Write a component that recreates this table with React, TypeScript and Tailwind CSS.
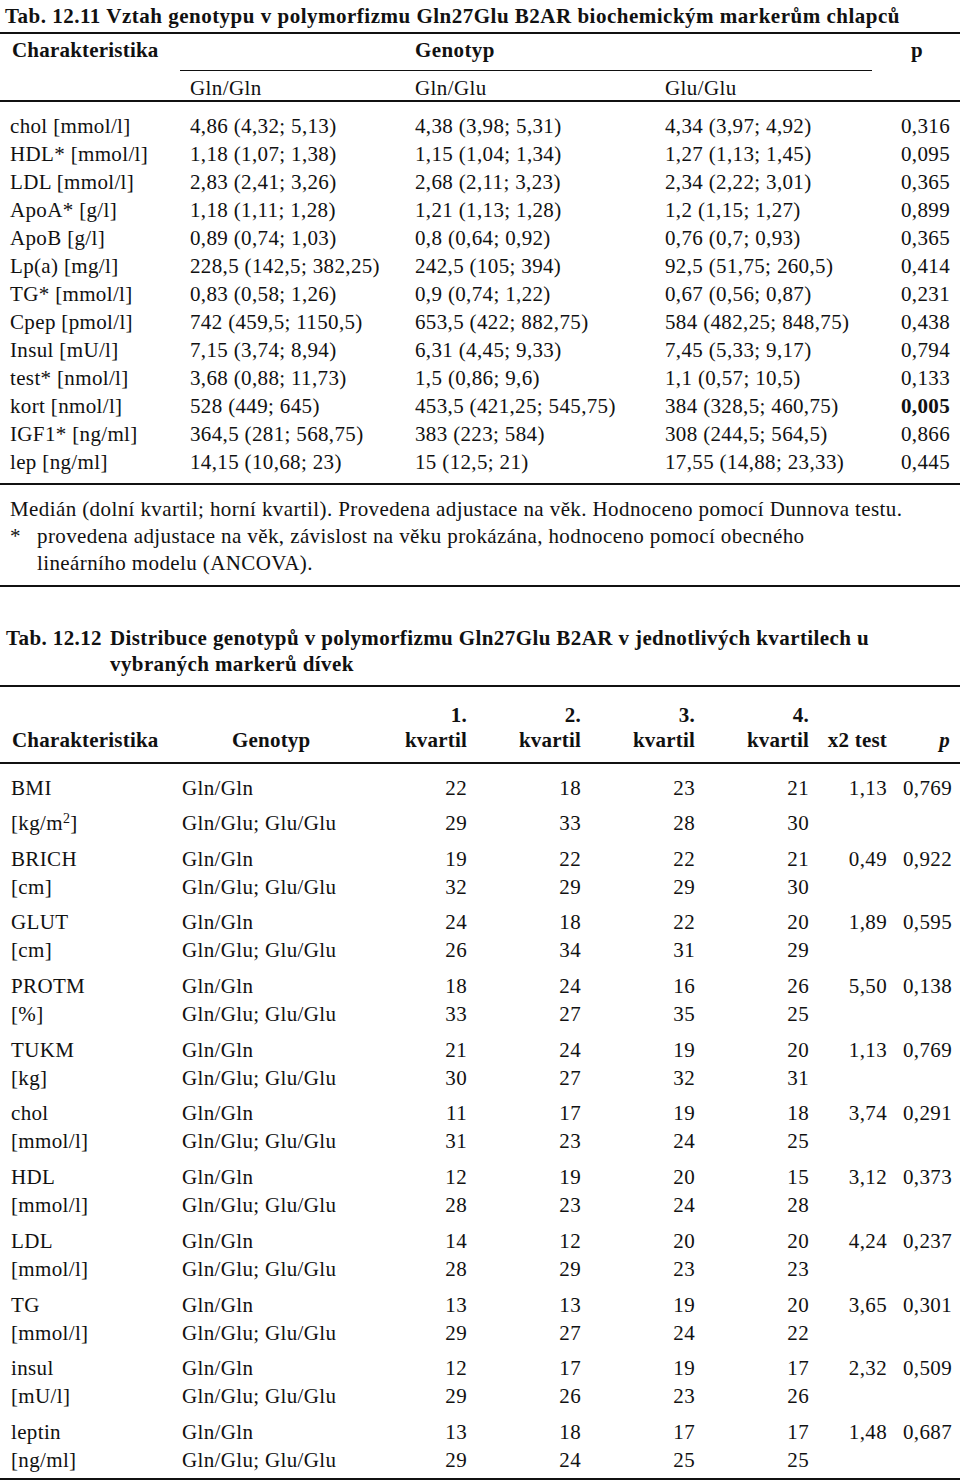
import React from "react";

const t1Rows = [
  ["chol [mmol/l]", "4,86 (4,32; 5,13)", "4,38 (3,98; 5,31)", "4,34 (3,97; 4,92)", "0,316"],
  ["HDL* [mmol/l]", "1,18 (1,07; 1,38)", "1,15 (1,04; 1,34)", "1,27 (1,13; 1,45)", "0,095"],
  ["LDL [mmol/l]", "2,83 (2,41; 3,26)", "2,68 (2,11; 3,23)", "2,34 (2,22; 3,01)", "0,365"],
  ["ApoA* [g/l]", "1,18 (1,11; 1,28)", "1,21 (1,13; 1,28)", "1,2 (1,15; 1,27)", "0,899"],
  ["ApoB [g/l]", "0,89 (0,74; 1,03)", "0,8 (0,64; 0,92)", "0,76 (0,7; 0,93)", "0,365"],
  ["Lp(a) [mg/l]", "228,5 (142,5; 382,25)", "242,5 (105; 394)", "92,5 (51,75; 260,5)", "0,414"],
  ["TG* [mmol/l]", "0,83 (0,58; 1,26)", "0,9 (0,74; 1,22)", "0,67 (0,56; 0,87)", "0,231"],
  ["Cpep [pmol/l]", "742 (459,5; 1150,5)", "653,5 (422; 882,75)", "584 (482,25; 848,75)", "0,438"],
  ["Insul [mU/l]", "7,15 (3,74; 8,94)", "6,31 (4,45; 9,33)", "7,45 (5,33; 9,17)", "0,794"],
  ["test* [nmol/l]", "3,68 (0,88; 11,73)", "1,5 (0,86; 9,6)", "1,1 (0,57; 10,5)", "0,133"],
  ["kort [nmol/l]", "528 (449; 645)", "453,5 (421,25; 545,75)", "384 (328,5; 460,75)", "0,005"],
  ["IGF1* [ng/ml]", "364,5 (281; 568,75)", "383 (223; 584)", "308 (244,5; 564,5)", "0,866"],
  ["lep [ng/ml]", "14,15 (10,68; 23)", "15 (12,5; 21)", "17,55 (14,88; 23,33)", "0,445"],
];

type Group = { name: string; unit: React.ReactNode; a: string[]; b: string[]; chi: string; p: string };

const t2Groups: Group[] = [
  { name: "BMI", unit: <>[kg/m<sup className="text-[14px]">2</sup>]</>, a: ["22", "18", "23", "21"], b: ["29", "33", "28", "30"], chi: "1,13", p: "0,769" },
  { name: "BRICH", unit: "[cm]", a: ["19", "22", "22", "21"], b: ["32", "29", "29", "30"], chi: "0,49", p: "0,922" },
  { name: "GLUT", unit: "[cm]", a: ["24", "18", "22", "20"], b: ["26", "34", "31", "29"], chi: "1,89", p: "0,595" },
  { name: "PROTM", unit: "[%]", a: ["18", "24", "16", "26"], b: ["33", "27", "35", "25"], chi: "5,50", p: "0,138" },
  { name: "TUKM", unit: "[kg]", a: ["21", "24", "19", "20"], b: ["30", "27", "32", "31"], chi: "1,13", p: "0,769" },
  { name: "chol", unit: "[mmol/l]", a: ["11", "17", "19", "18"], b: ["31", "23", "24", "25"], chi: "3,74", p: "0,291" },
  { name: "HDL", unit: "[mmol/l]", a: ["12", "19", "20", "15"], b: ["28", "23", "24", "28"], chi: "3,12", p: "0,373" },
  { name: "LDL", unit: "[mmol/l]", a: ["14", "12", "20", "20"], b: ["28", "29", "23", "23"], chi: "4,24", p: "0,237" },
  { name: "TG", unit: "[mmol/l]", a: ["13", "13", "19", "20"], b: ["29", "27", "24", "22"], chi: "3,65", p: "0,301" },
  { name: "insul", unit: "[mU/l]", a: ["12", "17", "19", "17"], b: ["29", "26", "23", "26"], chi: "2,32", p: "0,509" },
  { name: "leptin", unit: "[ng/ml]", a: ["13", "18", "17", "17"], b: ["29", "24", "25", "25"], chi: "1,48", p: "0,687" },
];

const t1Cols = "grid grid-cols-[180px_235px_250px_207px_1fr]";
const t2Cols = "grid grid-cols-[182px_178px_107px_114px_114px_114px_78px_65px]";

export default function App() {
  return (
    <div className="w-[960px] bg-white text-[#111] font-['Liberation_Serif','Times_New_Roman',serif] text-[21px] tracking-[0.4px]">
      {/* Tab. 12.11 */}
      <h1 className="h-[32px] pl-[5px] text-[21px] font-bold leading-[32px] tracking-[0.5px]">
        Tab. 12.11 Vztah genotypu v polymorfizmu Gln27Glu B2AR biochemickým markerům chlapců
      </h1>
      <div className="border-t-2 border-[#111]">
        <div className={t1Cols}>
          <div className="row-span-2 pl-[12px] pt-[4px] font-bold leading-[24px] tracking-[0.2px]">Charakteristika</div>
          <div className="col-span-3 h-[37px] border-b border-[#111] pl-[235px] pt-[4px] font-bold leading-[24px]">
            Genotyp
          </div>
          <div className="row-span-2 pr-[37px] pt-[4px] text-right font-bold leading-[24px]">p</div>
          <div className="h-[29px] pl-[10px] pt-[5px] leading-[24px]">Gln/Gln</div>
          <div className="pt-[5px] leading-[24px]">Gln/Glu</div>
          <div className="pt-[5px] leading-[24px]">Glu/Glu</div>
        </div>

        <div className="border-t-2 border-[#111] pt-[10px] pb-[7px] tracking-[0.35px]">
          {t1Rows.map((r) => (
            <div key={r[0]} className={`${t1Cols} leading-[28px]`}>
              <div className="pl-[10px]">{r[0]}</div>
              <div className="pl-[10px]">{r[1]}</div>
              <div>{r[2]}</div>
              <div>{r[3]}</div>
              <div className={`pr-[10px] text-right ${r[4] === "0,005" ? "font-bold" : ""}`}>{r[4]}</div>
            </div>
          ))}
        </div>

        <div className="border-t-2 border-[#111] pt-[11px] pb-[8px] pl-[10px] leading-[27px]">
          <p>Medián (dolní kvartil; horní kvartil). Provedena adjustace na věk. Hodnoceno pomocí Dunnova testu.</p>
          <div className="flex">
            <span className="w-[27px] shrink-0">*</span>
            <p>
              provedena adjustace na věk, závislost na věku prokázána, hodnoceno pomocí obecného
              <br />
              lineárního modelu (ANCOVA).
            </p>
          </div>
        </div>
        <div className="border-t-2 border-[#111]" />
      </div>

      {/* Tab. 12.12 */}
      <div className="mt-[38px] flex pl-[6px] font-bold leading-[26px] tracking-[0.4px]">
        <span className="w-[104px] shrink-0">Tab. 12.12</span>
        <span>
          Distribuce genotypů v polymorfizmu Gln27Glu B2AR v jednotlivých kvartilech u
          <br />
          vybraných markerů dívek
        </span>
      </div>

      <div className="mt-[8px] border-t-2 border-[#111]">
        <div className={`${t2Cols} pt-[16px] pb-[9px] font-bold leading-[25px] tracking-[0.2px]`}>
          <div className="flex items-end pl-[12px]">Charakteristika</div>
          <div className="flex items-end pl-[50px]">Genotyp</div>
          {["1.", "2.", "3.", "4."].map((q) => (
            <div key={q} className="text-right">
              <div>{q}</div>
              <div>kvartil</div>
            </div>
          ))}
          <div className="flex items-end justify-end">x2 test</div>
          <div className="flex items-end justify-end pr-[2px] italic">p</div>
        </div>

        <div className="flex flex-col gap-[7.7px] border-t-2 border-[#111] pt-[10px] pb-[4px] leading-[28px] tracking-[0.35px]">
          {t2Groups.map((g, i) => (
            <div key={g.name}>
              <div className={t2Cols}>
                <div className="pl-[11px]">{g.name}</div>
                <div>Gln/Gln</div>
                {g.a.map((v, k) => (
                  <div key={k} className="text-right">{v}</div>
                ))}
                <div className="text-right">{g.chi}</div>
                <div className="text-right">{g.p}</div>
              </div>
              <div className={`${t2Cols} ${i === 0 ? "mt-[7px]" : ""}`}>
                <div className="pl-[11px]">{g.unit}</div>
                <div>Gln/Glu; Glu/Glu</div>
                {g.b.map((v, k) => (
                  <div key={k} className="text-right">{v}</div>
                ))}
                <div />
                <div />
              </div>
            </div>
          ))}
        </div>
        <div className="border-t-2 border-[#111]" />
      </div>
    </div>
  );
}
